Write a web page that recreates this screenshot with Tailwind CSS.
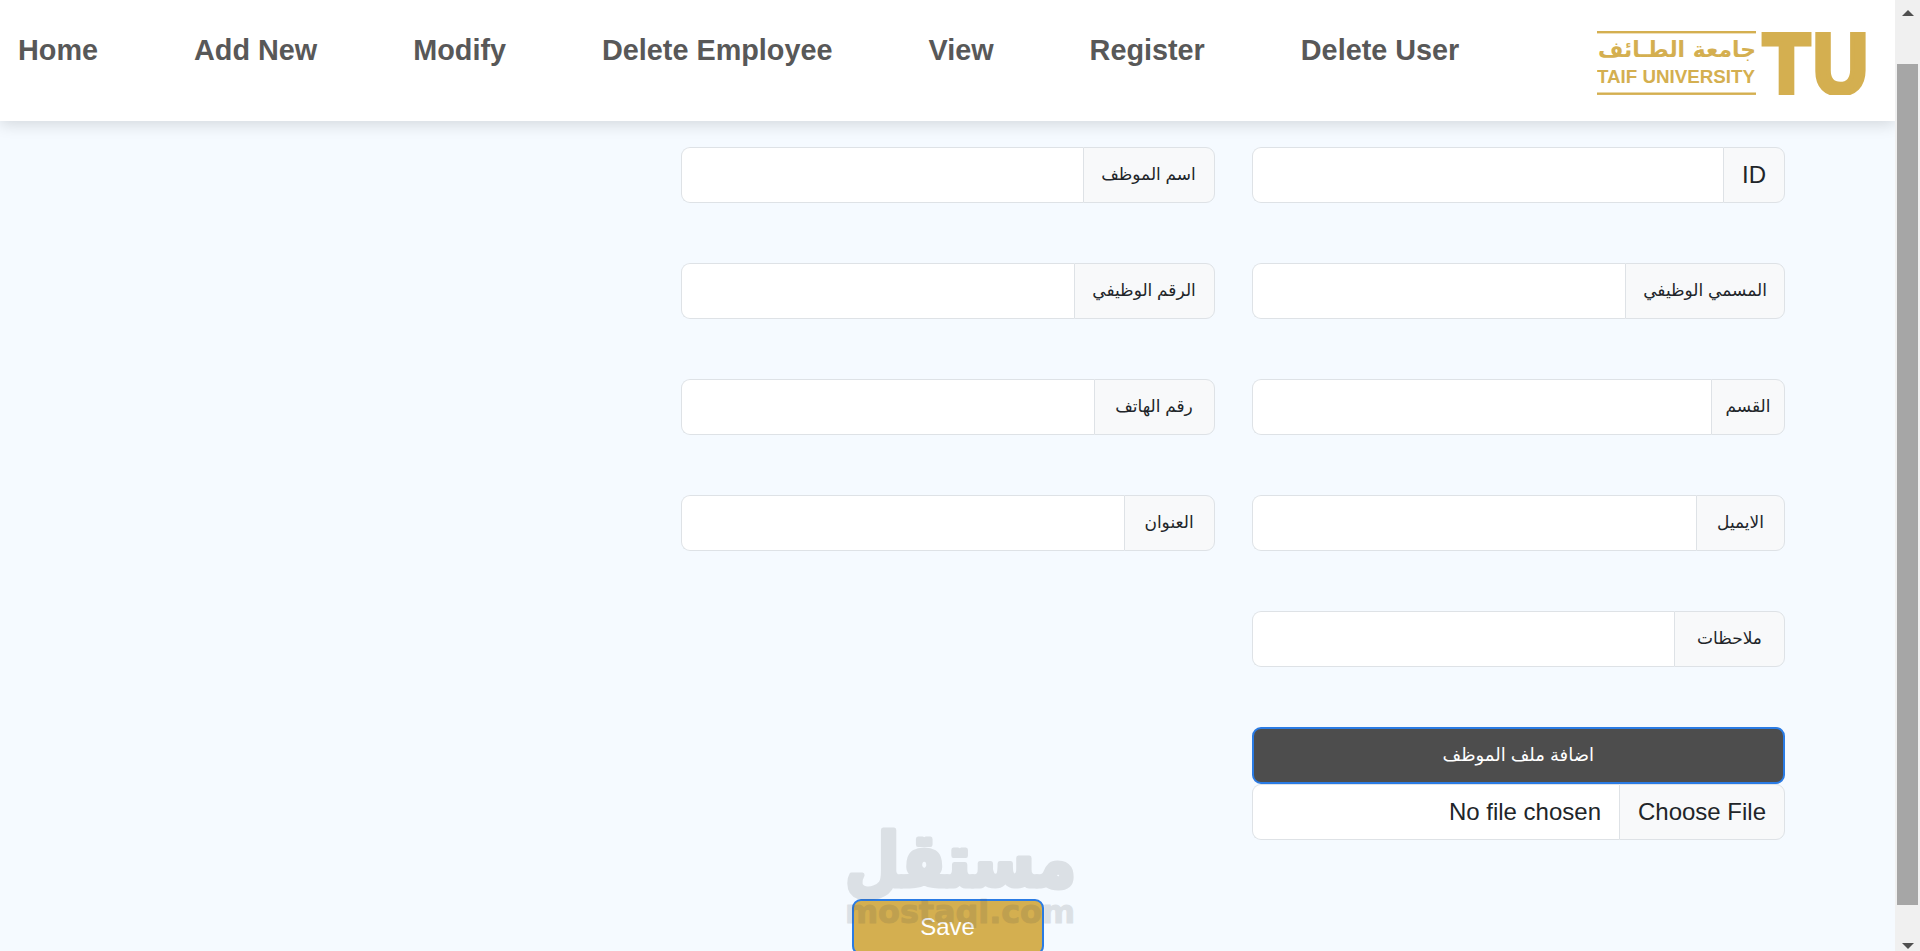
<!DOCTYPE html>
<html lang="ar">
<head>
  <meta charset="UTF-8" />
  <meta name="viewport" content="width=device-width, initial-scale=1.0" />
  <title>Add Employee</title>
  <script src="https://cdn.jsdelivr.net/npm/@tailwindcss/browser@4"></script>
</head>
<body class="h-screen overflow-hidden flex bg-[#f5faff] font-['Liberation_Sans','DejaVu_Sans',sans-serif] text-[#212529]">
  <div class="relative flex-1 min-w-0 h-full overflow-hidden">
    <!-- navbar -->
    <nav dir="ltr" class="relative z-10 h-[121px] bg-white flex items-start pl-[18px] pr-[29px] shadow-[0_4px_14px_rgba(0,0,0,0.13)]">
      <ul class="flex gap-24 text-[28.8px] font-bold text-[#585858] mt-[29px]">
        <li><a href="#">Home</a></li>
        <li><a href="#">Add New</a></li>
        <li><a href="#">Modify</a></li>
        <li><a href="#">Delete Employee</a></li>
        <li><a href="#">View</a></li>
        <li><a href="#">Register</a></li>
        <li><a href="#">Delete User</a></li>
      </ul>
      <!-- logo -->
      <svg class="ml-auto mt-[31px]" width="269" height="64" viewBox="0 0 269 64" fill="#d4af50">
        <rect x="0" y="0" width="159" height="2.4" />
        <rect x="0" y="61.5" width="159" height="2.4" />
        <text x="159" y="26" text-anchor="end" font-size="22" font-weight="700" font-family="DejaVu Sans" textLength="158" lengthAdjust="spacingAndGlyphs">جامعة الطـائف</text>
        <text x="0" y="52" font-size="19" font-weight="700" font-family="Liberation Sans" textLength="158" lengthAdjust="spacingAndGlyphs">TAIF UNIVERSITY</text>
        <text x="166" y="61.5" font-size="85" font-weight="700" font-family="Liberation Sans" stroke="#d4af50" stroke-width="5" textLength="47" lengthAdjust="spacingAndGlyphs">T</text>
        <text x="216" y="61.5" font-size="85" font-weight="700" font-family="Liberation Sans" stroke="#d4af50" stroke-width="5" textLength="55" lengthAdjust="spacingAndGlyphs">U</text>
      </svg>
    </nav>

    <!-- form -->
    <form dir="rtl" class="pt-[26px]">
      <div class="mr-[110px] w-[1104px] grid grid-cols-2 gap-x-[37px] gap-y-[60px] text-[17px]">
        <div class="flex h-[56px]">
          <span class="w-[62px] flex items-center justify-center text-[24px] bg-[#f8f9fa] border border-[#dee2e6] rounded-r-[9px]">ID</span>
          <input type="text" class="flex-1 min-w-0 bg-white border border-r-0 border-[#dee2e6] rounded-l-[9px]" />
        </div>
        <div class="flex h-[56px]">
          <span class="w-[132px] flex items-center justify-center bg-[#f8f9fa] border border-[#dee2e6] rounded-r-[9px]">اسم الموظف</span>
          <input type="text" class="flex-1 min-w-0 bg-white border border-r-0 border-[#dee2e6] rounded-l-[9px]" />
        </div>
        <div class="flex h-[56px]">
          <span class="w-[160px] flex items-center justify-center bg-[#f8f9fa] border border-[#dee2e6] rounded-r-[9px]">المسمي الوظيفي</span>
          <input type="text" class="flex-1 min-w-0 bg-white border border-r-0 border-[#dee2e6] rounded-l-[9px]" />
        </div>
        <div class="flex h-[56px]">
          <span class="w-[141px] flex items-center justify-center bg-[#f8f9fa] border border-[#dee2e6] rounded-r-[9px]">الرقم الوظيفي</span>
          <input type="text" class="flex-1 min-w-0 bg-white border border-r-0 border-[#dee2e6] rounded-l-[9px]" />
        </div>
        <div class="flex h-[56px]">
          <span class="w-[74px] flex items-center justify-center bg-[#f8f9fa] border border-[#dee2e6] rounded-r-[9px]">القسم</span>
          <input type="text" class="flex-1 min-w-0 bg-white border border-r-0 border-[#dee2e6] rounded-l-[9px]" />
        </div>
        <div class="flex h-[56px]">
          <span class="w-[121px] flex items-center justify-center bg-[#f8f9fa] border border-[#dee2e6] rounded-r-[9px]">رقم الهاتف</span>
          <input type="text" class="flex-1 min-w-0 bg-white border border-r-0 border-[#dee2e6] rounded-l-[9px]" />
        </div>
        <div class="flex h-[56px]">
          <span class="w-[89px] flex items-center justify-center bg-[#f8f9fa] border border-[#dee2e6] rounded-r-[9px]">الايميل</span>
          <input type="text" class="flex-1 min-w-0 bg-white border border-r-0 border-[#dee2e6] rounded-l-[9px]" />
        </div>
        <div class="flex h-[56px]">
          <span class="w-[91px] flex items-center justify-center bg-[#f8f9fa] border border-[#dee2e6] rounded-r-[9px]">العنوان</span>
          <input type="text" class="flex-1 min-w-0 bg-white border border-r-0 border-[#dee2e6] rounded-l-[9px]" />
        </div>
        <div class="flex h-[56px]">
          <span class="w-[111px] flex items-center justify-center bg-[#f8f9fa] border border-[#dee2e6] rounded-r-[9px]">ملاحظات</span>
          <input type="text" class="flex-1 min-w-0 bg-white border border-r-0 border-[#dee2e6] rounded-l-[9px]" />
        </div>
        <div></div>
        <div>
          <button type="button" class="block w-full h-[57px] text-[18px] bg-[#4d4d4d] text-white border-2 border-[#2a7be4] rounded-[9px]">اضافة ملف الموظف</button>
          <div class="flex h-[56px] text-[24px]">
            <span class="w-[166px] flex items-center justify-center bg-[#f8f9fa] border border-[#dee2e6] rounded-r-[9px]">Choose File</span>
            <span class="flex-1 flex items-center pr-[18px] bg-white border border-r-0 border-[#dee2e6] rounded-l-[9px]">No file chosen</span>
          </div>
        </div>
      </div>
      <div class="flex justify-center mt-[59px]">
        <button type="button" class="w-[192px] h-[56px] bg-[#d4af50] text-white text-[24px] border-2 border-[#2a7be4] rounded-[9px]">Save</button>
      </div>
    </form>

    <!-- watermark -->
    <svg class="absolute left-[843px] top-[820px] pointer-events-none" width="236" height="108" viewBox="0 0 236 108">
      <g opacity="0.14" fill="#45484d" stroke="#45484d" stroke-linejoin="round" font-family="DejaVu Sans" font-weight="700">
        <text x="233" y="66" text-anchor="end" font-size="74" stroke-width="5" textLength="231" lengthAdjust="spacingAndGlyphs">مستقل</text>
        <text x="2" y="103" font-size="32" textLength="230" lengthAdjust="spacingAndGlyphs">mostaql.com</text>
      </g>
    </svg>
  </div>

  <!-- scrollbar -->
  <div class="w-[25px] h-full bg-[#f0f0f0] flex flex-col items-center relative">
    <span class="mt-[10px] w-0 h-0 border-x-[6px] border-x-transparent border-b-[6px] border-b-[#505050]"></span>
    <span class="mt-[48px] w-[21px] h-[841px] bg-[#a6a6a6]"></span>
    <span class="mt-[38px] w-0 h-0 border-x-[6px] border-x-transparent border-t-[6px] border-t-[#505050]"></span>
  </div>
</body>
</html>
